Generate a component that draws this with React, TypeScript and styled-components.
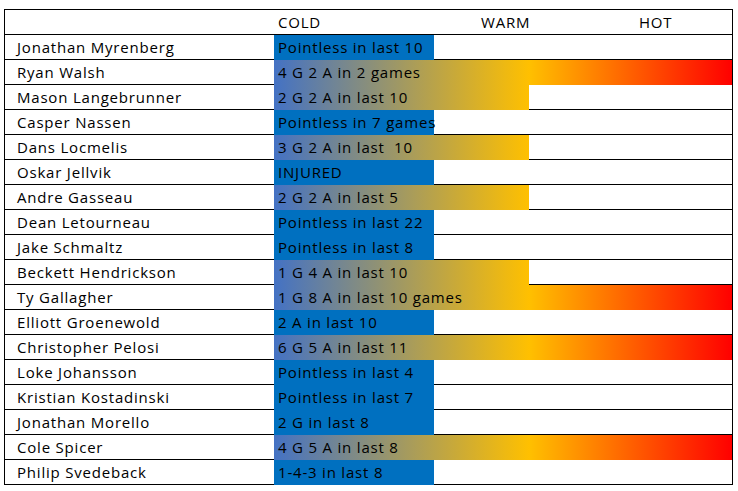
import React from "react";
import styled, { createGlobalStyle, css } from "styled-components";

const Global = createGlobalStyle`
  html, body { margin: 0; padding: 0; background: #ffffff; }
  body { padding: 9px 0 0 4px; font-family: "Open Sans", Lato, sans-serif; }
`;

type Heat = "cold" | "warm" | "hot";

const rows: { name: string; note: string; heat: Heat }[] = [
  { name: "Jonathan Myrenberg", note: "Pointless in last 10", heat: "cold" },
  { name: "Ryan Walsh", note: "4 G 2 A in 2 games", heat: "hot" },
  { name: "Mason Langebrunner", note: "2 G 2 A in last 10", heat: "warm" },
  { name: "Casper Nassen", note: "Pointless in 7 games", heat: "cold" },
  { name: "Dans Locmelis", note: "3 G 2 A in last  10", heat: "warm" },
  { name: "Oskar Jellvik", note: "INJURED", heat: "cold" },
  { name: "Andre Gasseau", note: "2 G 2 A in last 5", heat: "warm" },
  { name: "Dean Letourneau", note: "Pointless in last 22", heat: "cold" },
  { name: "Jake Schmaltz", note: "Pointless in last 8", heat: "cold" },
  { name: "Beckett Hendrickson", note: "1 G 4 A in last 10", heat: "warm" },
  { name: "Ty Gallagher", note: "1 G 8 A in last 10 games", heat: "hot" },
  { name: "Elliott Groenewold", note: "2 A in last 10", heat: "cold" },
  { name: "Christopher Pelosi", note: "6 G 5 A in last 11", heat: "hot" },
  { name: "Loke Johansson", note: "Pointless in last 4", heat: "cold" },
  { name: "Kristian Kostadinski", note: "Pointless in last 7", heat: "cold" },
  { name: "Jonathan Morello", note: "2 G in last 8", heat: "cold" },
  { name: "Cole Spicer", note: "4 G 5 A in last 8", heat: "hot" },
  { name: "Philip Svedeback", note: "1-4-3 in last 8", heat: "cold" },
];

const Table = styled.div`
  width: 727px;
  border: 1px solid #000;
  border-bottom: none;
  display: flex;
  flex-direction: column;
`;

const Row = styled.div`
  display: grid;
  grid-template-columns: 269px 458px;
  height: 24px;
  border-bottom: 1px solid #000;
  font-size: 15px;
  letter-spacing: 0.8px;
  color: #000;
`;

const NameCell = styled.div`
  padding-left: 12px;
  line-height: 25px;
  white-space: nowrap;
`;

const BarCell = styled.div`
  display: flex;
  align-items: stretch;
`;

const heatStyles = {
  cold: css`
    width: 160px;
    background: #0070c0;
  `,
  warm: css`
    width: 255px;
    background: linear-gradient(to right, #4472c4, #ffc000);
  `,
  hot: css`
    width: 458px;
    background: linear-gradient(to right, #4472c4 0%, #ffc000 55.7%, #ff0000 100%);
  `,
};

const Bar = styled.div<{ $heat: Heat }>`
  ${(p) => heatStyles[p.$heat]}
  padding-left: 4px;
  box-sizing: border-box;
  line-height: 25px;
  white-space: pre;
  overflow: visible;
`;

const HeaderCells = styled.div`
  display: grid;
  grid-template-columns: 203px 158px 1fr;
  padding-left: 4px;
  line-height: 24px;
`;

export default function App() {
  return (
    <>
      <Global />
      <Table>
        <Row>
          <NameCell />
          <HeaderCells>
            <span>COLD</span>
            <span>WARM</span>
            <span>HOT</span>
          </HeaderCells>
        </Row>
        {rows.map((r) => (
          <Row key={r.name}>
            <NameCell>{r.name}</NameCell>
            <BarCell>
              <Bar $heat={r.heat}>{r.note}</Bar>
            </BarCell>
          </Row>
        ))}
      </Table>
    </>
  );
}
